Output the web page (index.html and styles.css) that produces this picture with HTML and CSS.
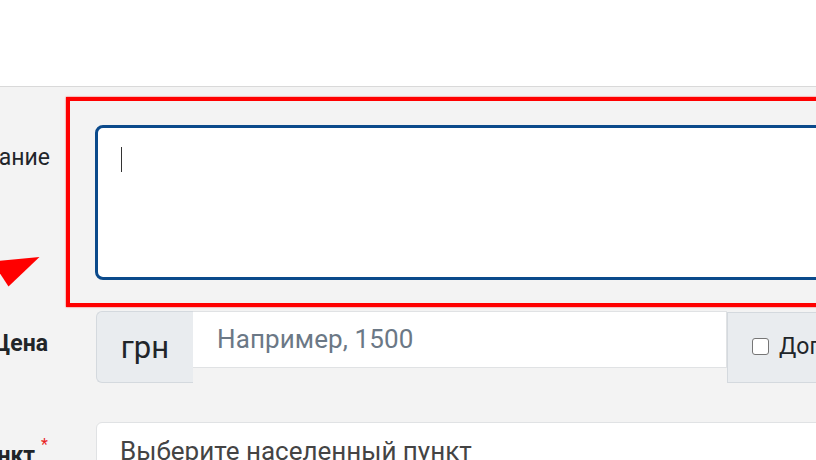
FILE: index.html
```html
<!DOCTYPE html>
<html lang="ru">
<head>
<meta charset="utf-8">
<title>Форма</title>
<link rel="stylesheet" href="styles.css">
</head>
<body>
<div class="topbar"></div>
<main class="panel">
  <div class="row row-desc">
    <div class="label label-desc"><span>Описание</span></div>
    <div class="highlight">
      <div class="textarea"><span class="caret"></span></div>
    </div>
  </div>
  <div class="row row-price">
    <div class="label label-mid"><span class="bold">Цена</span></div>
    <div class="input-group">
      <div class="addon addon-left">грн</div>
      <div class="input"><span class="placeholder">Например, 1500</span></div>
      <div class="addon addon-right"><span class="check"></span><span>Договорная</span></div>
    </div>
  </div>
  <div class="row row-city">
    <div class="label label-city"><span class="bold">Населенный пункт<sup class="req">*</sup></span></div>
    <div class="select">Выберите населенный пункт</div>
  </div>
</main>
<svg class="arrow" width="60" height="50" viewBox="0 0 60 50">
  <polygon points="39.5,7 -8,11.5 8.5,36.5" fill="#ff0000"/>
</svg>
</body>
</html>
```
FILE: styles.css
```css
html, body {
  margin: 0;
  padding: 0;
}
body {
  width: 816px;
  height: 460px;
  overflow: hidden;
  background: #ffffff;
  font-family: Roboto, "Noto Sans", "Liberation Sans", sans-serif;
  color: #212529;
  position: relative;
}
.topbar {
  height: 86px;
  border-bottom: 1px solid #d9d9d9;
  background: #ffffff;
}
.panel {
  width: 1200px;
  background: #f3f3f3;
  padding-top: 10px;
  height: 400px;
}
.row {
  display: grid;
  grid-template-columns: 96px 1fr;
}
.row-desc {
  grid-template-columns: 66px 1fr;
}
.row-price {
  margin-top: 4px;
}
.row-city {
  margin-top: 39px;
}
.label {
  display: flex;
  justify-content: flex-end;
  font-size: 23px;
  line-height: 34px;
  white-space: nowrap;
  color: #212529;
}
.label-desc {
  padding-right: 16px;
  padding-top: 44px;
}
.label-mid {
  padding-right: 48px;
  align-items: center;
  padding-bottom: 6px;
}
.label-city {
  padding-right: 48px;
  padding-top: 10px;
}
.bold {
  font-weight: 700;
}
.req {
  color: #e8231f;
  font-size: 16px;
  font-weight: 400;
  position: relative;
  top: -4px;
  margin-left: 6px;
}
.highlight {
  border: 4px solid #ff0000;
  box-shadow: 0 0 1.5px #ff3030;
  padding: 24px 0 23px 25px;
  width: 1000px;
}
.textarea {
  border: 3px solid #0b4a8b;
  border-radius: 8px;
  background: #ffffff;
  padding: 19px 23px;
  box-sizing: border-box;
  height: 155px;
}
.caret {
  display: block;
  width: 1px;
  height: 25px;
  background: #333333;
}
.input-group {
  display: flex;
  align-items: flex-start;
  width: 1000px;
}
.addon {
  background: #e9ecef;
  border: 1px solid #d4d9de;
  height: 72px;
  box-sizing: border-box;
  display: flex;
  align-items: center;
  padding: 0 24px;
  color: #212529;
}
.addon-left {
  border-radius: 6px 0 0 6px;
  font-size: 31px;
  width: 97px;
  justify-content: center;
  padding: 0;
  border-right: none;
}
.input {
  width: 534px;
  height: 57px;
  box-sizing: border-box;
  background: #ffffff;
  border: 1px solid #e0e2e4;
  border-left: none;
  padding: 12px 24px;
  font-size: 26px;
  line-height: 31px;
  letter-spacing: 0.1px;
}
.placeholder {
  color: #6b7886;
}
.addon-right {
  font-size: 23px;
  margin-top: 1px;
  height: 71px;
  padding-bottom: 2px;
}
.check {
  width: 15px;
  height: 15px;
  border: 1.5px solid #767676;
  border-radius: 3px;
  background: #ffffff;
  margin-right: 10px;
  flex: none;
}
.select {
  width: 1000px;
  height: 72px;
  box-sizing: border-box;
  background: #ffffff;
  border: 1px solid #e0e2e4;
  border-radius: 6px;
  padding: 13px 23px;
  font-size: 26px;
  line-height: 31px;
  color: #444444;
  white-space: nowrap;
}
.arrow {
  position: absolute;
  left: 0;
  top: 250px;
}
```
